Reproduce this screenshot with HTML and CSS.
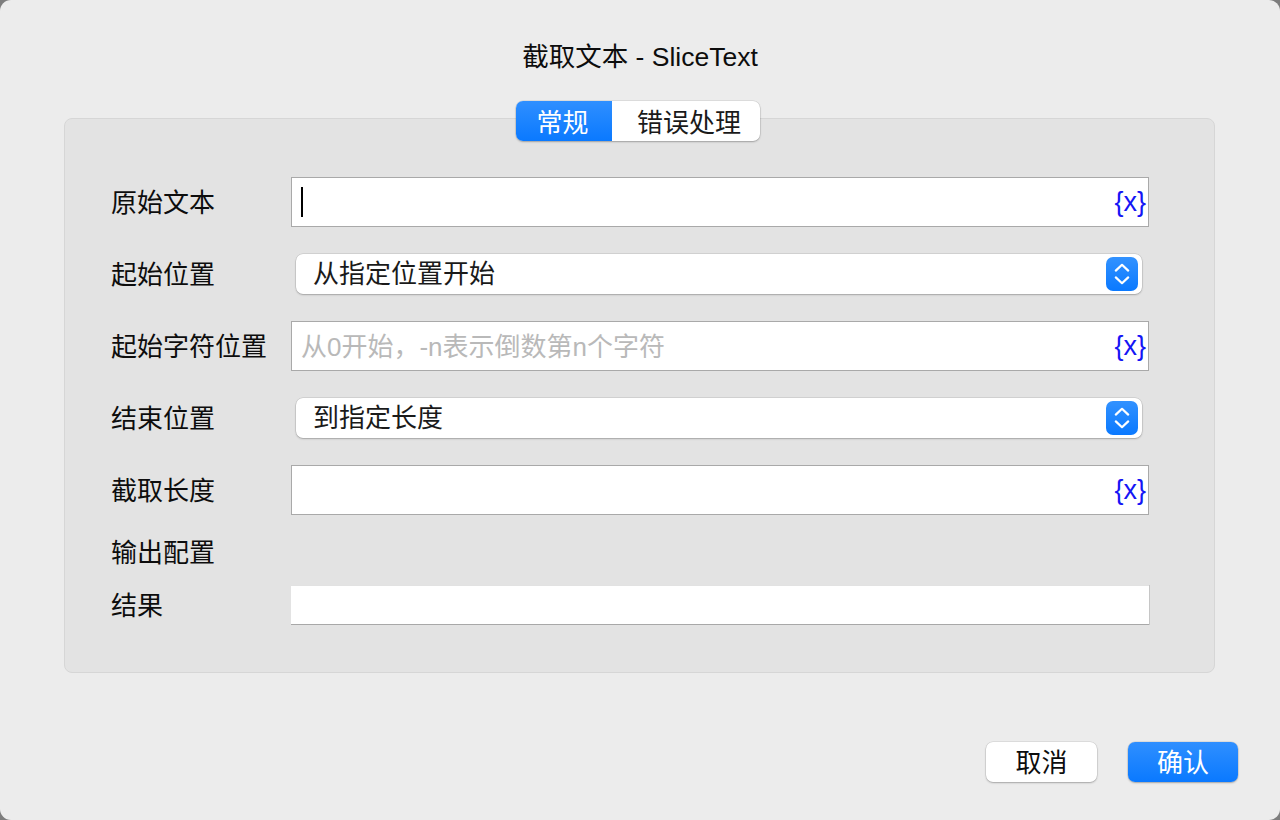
FILE: index.html
```html
<!DOCTYPE html>
<html lang="zh">
<head>
<meta charset="utf-8">
<link rel="stylesheet" href="styles.css">
</head>
<body>
<div class="window">
  <div class="title">截取文本 - SliceText</div>
  <div class="tabs">
    <div class="seg">
      <span class="tab active">常规</span>
      <span class="tab">错误处理</span>
    </div>
  </div>
  <div class="panel">
    <div class="row">
      <div class="label">原始文本</div>
      <div class="field"><span class="caret"></span><span class="var">{x}</span></div>
    </div>
    <div class="row">
      <div class="label">起始位置</div>
      <div class="select">
        <span class="sel-text">从指定位置开始</span>
        <span class="stepper"><svg width="16" height="22" viewBox="0 0 16 22"><path d="M1.8 7.6 L8 1.8 L14.2 7.6 M1.8 14.4 L8 20.2 L14.2 14.4" fill="none" stroke="#fff" stroke-width="2.2" stroke-linecap="round" stroke-linejoin="round"/></svg></span>
      </div>
    </div>
    <div class="row">
      <div class="label">起始字符位置</div>
      <div class="field"><span class="placeholder">从0开始，-n表示倒数第n个字符</span><span class="var">{x}</span></div>
    </div>
    <div class="row">
      <div class="label">结束位置</div>
      <div class="select">
        <span class="sel-text">到指定长度</span>
        <span class="stepper"><svg width="16" height="22" viewBox="0 0 16 22"><path d="M1.8 7.6 L8 1.8 L14.2 7.6 M1.8 14.4 L8 20.2 L14.2 14.4" fill="none" stroke="#fff" stroke-width="2.2" stroke-linecap="round" stroke-linejoin="round"/></svg></span>
      </div>
    </div>
    <div class="row">
      <div class="label">截取长度</div>
      <div class="field"><span class="var">{x}</span></div>
    </div>
    <div class="section">输出配置</div>
    <div class="row result-row">
      <div class="label">结果</div>
      <div class="field flat"></div>
    </div>
  </div>
  <div class="buttons">
    <span class="btn">取消</span>
    <span class="btn primary">确认</span>
  </div>
</div>
</body>
</html>
```

FILE: styles.css
```css
html, body {
  margin: 0;
  padding: 0;
  background: #7d7d7d;
}
.window {
  width: 1280px;
  height: 820px;
  background: #ececec;
  border-radius: 11px;
  overflow: hidden;
  font-family: "Liberation Sans", "Noto Sans CJK SC", sans-serif;
  font-size: 26px;
  color: #0d0d0d;
  display: flex;
  flex-direction: column;
}
.title {
  margin-top: 40px;
  height: 34px;
  line-height: 34px;
  text-align: center;
  font-size: 26.5px;
  color: #0d0d0d;
}
.tabs {
  margin-top: 27px;
  margin-bottom: -23px;
  display: flex;
  justify-content: center;
  position: relative;
  z-index: 1;
  padding-right: 4px;
}
.seg {
  display: flex;
  height: 40px;
  border-radius: 7px;
  background: #fff;
  box-shadow: 0 0 0 0.5px rgba(0,0,0,0.12), 0 1px 2px rgba(0,0,0,0.25);
  overflow: hidden;
}
.tab {
  display: flex;
  align-items: center;
  justify-content: center;
  font-size: 26px;
  color: #1a1a1a;
  padding: 0 19px 1px 25px;
}
.tab.active {
  width: 96px;
  padding: 0 3px 1px 0;
  box-sizing: border-box;
  color: #fff;
  background: linear-gradient(#2f8fff, #0a79ff);
}
.panel {
  margin: 0 65px 0 64px;
  border: 1px solid #d6d6d6;
  border-radius: 8px;
  background: #e3e3e3;
  padding: 58px 65px 47px 46px;
  display: flex;
  flex-direction: column;
}
.row {
  display: grid;
  grid-template-columns: 180px 1fr;
  align-items: center;
  height: 50px;
  margin-bottom: 22px;
}
.label {
  line-height: 34px;
  white-space: nowrap;
  padding-top: 2px;
}
.field {
  height: 50px;
  box-sizing: border-box;
  background: #fff;
  border: 1px solid #a9a9a9;
  display: flex;
  align-items: center;
  padding: 0 2px 0 9px;
}
.caret {
  width: 2px;
  height: 30px;
  background: #000;
}
.placeholder {
  color: #b9b9b9;
  padding-bottom: 3px;
}
.var {
  margin-left: auto;
  color: #1515f5;
  font-family: "Liberation Sans", sans-serif;
  font-size: 27px;
}
.select {
  margin: 0 7px 0 5px;
  height: 40px;
  box-sizing: border-box;
  background: #fff;
  border-radius: 7px;
  box-shadow: 0 0 0 0.5px rgba(0,0,0,0.14), 0 1px 2px rgba(0,0,0,0.22);
  display: flex;
  align-items: center;
  padding: 0 4px 0 17px;
}
.sel-text {
  color: #1a1a1a;
  padding-bottom: 5px;
}
.stepper {
  margin-left: auto;
  width: 32px;
  height: 34px;
  border-radius: 7px;
  background: linear-gradient(#3292ff, #0a79ff);
  display: flex;
  align-items: center;
  justify-content: center;
}
.section {
  height: 34px;
  line-height: 34px;
  margin-top: -1px;
  margin-bottom: 15px;
}
.result-row {
  height: 40px;
  margin-bottom: 0;
}
.field.flat {
  height: 40px;
  border: none;
  border-top: 1px solid #e2e2e2;
  border-bottom: 1px solid #a8a8a8;
  box-shadow: 1px 0 0 #c6c6c6;
}
.buttons {
  margin-top: 69px;
  margin-right: 42px;
  display: flex;
  justify-content: flex-end;
  gap: 31px;
}
.btn {
  width: 111px;
  height: 40px;
  box-sizing: border-box;
  padding-bottom: 4px;
  border-radius: 7px;
  display: flex;
  align-items: center;
  justify-content: center;
  background: #fff;
  color: #0d0d0d;
  box-shadow: 0 0 0 0.5px rgba(0,0,0,0.12), 0 1px 2px rgba(0,0,0,0.25);
}
.btn.primary {
  width: 110px;
  color: #fff;
  background: linear-gradient(#2f8fff, #0a79ff);
}
```
